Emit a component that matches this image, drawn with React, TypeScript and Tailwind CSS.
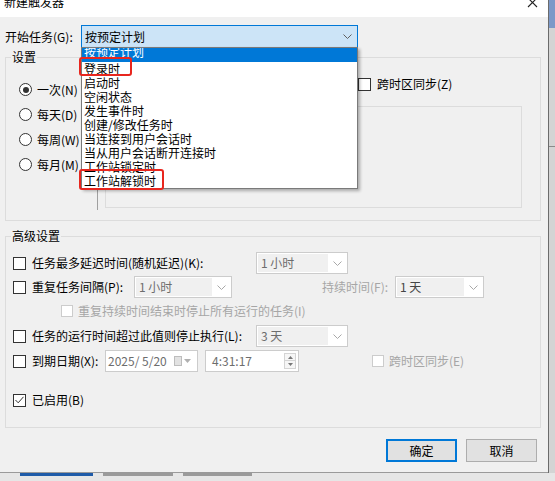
import React from 'react';

const Chevron = ({ color = '#606060' }: { color?: string }) => (
  <svg width="9" height="5" viewBox="0 0 9 5">
    <polyline points="0.5,0.5 4.5,4.5 8.5,0.5" fill="none" stroke={color} strokeWidth="1" />
  </svg>
);

const Checkbox = ({ checked = false, disabled = false }: { checked?: boolean; disabled?: boolean }) => (
  <span
    className={
      disabled
        ? 'flex h-[12px] w-[12px] shrink-0 items-center justify-center border border-[#cccccc] bg-white'
        : 'flex h-[13px] w-[13px] shrink-0 items-center justify-center border border-[#333333] bg-white'
    }
  >
    {checked && (
      <svg width="9" height="8" viewBox="0 0 9 8">
        <polyline points="0.5,4 3.2,6.8 8.5,0.8" fill="none" stroke="#333333" strokeWidth="1" />
      </svg>
    )}
  </span>
);

const Radio = ({ checked = false, label }: { checked?: boolean; label: string }) => (
  <div className="flex h-[25px] items-center gap-[5px] pl-[13px]">
    <span className="flex h-[13px] w-[13px] items-center justify-center rounded-full border border-[#333333] bg-white">
      {checked && <span className="h-[6px] w-[6px] rounded-full bg-[#333333]" />}
    </span>
    <span>{label}</span>
  </div>
);

const Combo = ({ text, width, dark = false }: { text: string; width: string; dark?: boolean }) => (
  <div className={`flex h-[22px] ${width} border border-[#cccccc] bg-white p-[1px]`}>
    <span className={`flex-1 bg-[#f0f0f0] pl-[3px] leading-[18px] ${dark ? 'text-[#444444]' : 'text-[#6d6d6d]'}`}>
      {text}
    </span>
    <span className="flex w-[18px] items-center justify-center">
      <Chevron color="#a8a8a8" />
    </span>
  </div>
);

const triggers = [
  '登录时',
  '启动时',
  '空闲状态',
  '发生事件时',
  '创建/修改任务时',
  '当连接到用户会话时',
  '当从用户会话断开连接时',
  '工作站锁定时',
  '工作站解锁时',
];

export default function App() {
  return (
    <div className="flex h-[481px] w-[555px] flex-col overflow-hidden bg-[#e6e6e6] font-['Noto_Sans_CJK_SC',sans-serif] text-[12px] leading-[14px] text-black">
      <div className="flex h-[473px]">
        {/* dialog window */}
        <div className="flex w-[548px] flex-col border-b border-[#9a9a9a] bg-[#f0f0f0]">
          <div className="flex h-[17px] shrink-0 justify-between overflow-hidden bg-white">
            <span className="-mt-[5px] pl-[4px]">新建触发器</span>
            <svg width="12" height="9" viewBox="0 0 12 9" className="mr-[9px]">
              <path d="M1 -2 L10 7 M10 -2 L1 7" stroke="#222222" strokeWidth="1.1" />
            </svg>
          </div>

          <div className="flex flex-1 flex-col pl-[5px] pr-[7px]">
            {/* begin task row */}
            <div className="relative mt-[8px] flex h-[23px] items-center">
              <span className="w-[76px]">开始任务(G):</span>
              <div className="flex h-[23px] w-[277px] items-center justify-between border border-[#0078d7] bg-[#cce4f7] pl-[3px] pr-[5px]">
                <span>按预定计划</span>
                <Chevron />
              </div>

              <div className="absolute left-[76px] top-[22px] z-10 flex h-[142px] w-[277px] flex-col border border-[#7a7a7a] bg-white shadow-[2px_2px_3px_rgba(0,0,0,0.3)]">
                <div className="h-[14px] overflow-hidden bg-[#0078d7] pl-[2px] text-white">
                  <span className="block -translate-y-[3px]">按预定计划</span>
                </div>
                {triggers.map((t) => (
                  <div key={t} className="h-[14px] overflow-hidden pl-[2px] leading-[14px]">
                    {t}
                  </div>
                ))}
              </div>

              <div className="absolute left-[74px] top-[32px] z-20 h-[19px] w-[53px] rounded-[3px] border-2 border-[#e8261e]" />
              <div className="absolute left-[74px] top-[144px] z-20 h-[21px] w-[85px] rounded-[3px] border-2 border-[#e8261e]" />
            </div>

            {/* settings group */}
            <fieldset className="mt-[2px] border border-[#dcdcdc] pb-[10px]">
              <legend className="ml-[5px] px-[1px] leading-[14px]">设置</legend>
              <div className="mt-[6px] flex h-[140px]">
                <div className="flex w-[91px] flex-col pt-[7px]">
                  <Radio checked label="一次(N)" />
                  <Radio label="每天(D)" />
                  <Radio label="每周(W)" />
                  <Radio label="每月(M)" />
                </div>
                <div className="w-px bg-[#a0a0a0]" />
                <div className="flex flex-col pl-[7px]">
                  <div className="flex h-[28px] items-center">
                    <span className="ml-[253px]">
                      <Checkbox />
                    </span>
                    <span className="ml-[6px]">跨时区同步(Z)</span>
                  </div>
                  <div className="mt-[8px] h-[102px] w-[417px] border border-[#dcdcdc]" />
                </div>
              </div>
            </fieldset>

            {/* advanced group */}
            <fieldset className="mt-[8px] border border-[#dcdcdc] pb-[15px]">
              <legend className="ml-[5px] px-[1px] leading-[14px]">高级设置</legend>
              <div className="flex flex-col pt-[8px]">
                <div className="flex h-[24px] items-center pl-[7px]">
                  <Checkbox />
                  <span className="ml-[6px] w-[224px]">任务最多延迟时间(随机延迟)(K):</span>
                  <Combo text="1 小时" width="w-[92px]" />
                </div>
                <div className="flex h-[24px] items-center pl-[7px]">
                  <Checkbox />
                  <span className="ml-[6px] w-[102px]">重复任务间隔(P):</span>
                  <Combo text="1 小时" width="w-[98px]" />
                  <span className="ml-[90px] w-[73px] text-[#a6a6a6]">持续时间(F):</span>
                  <Combo text="1 天" width="w-[89px]" dark />
                </div>
                <div className="flex h-[24px] items-center pl-[55px]">
                  <Checkbox disabled />
                  <span className="ml-[5px] text-[#a6a6a6]">重复持续时间结束时停止所有运行的任务(I)</span>
                </div>
                <div className="mt-[1px] flex h-[24px] items-center pl-[7px]">
                  <Checkbox />
                  <span className="ml-[6px] w-[224px]">任务的运行时间超过此值则停止执行(L):</span>
                  <Combo text="3 天" width="w-[92px]" />
                </div>
                <div className="mt-[1px] flex h-[24px] items-center pl-[7px]">
                  <Checkbox />
                  <span className="ml-[6px] w-[73px]">到期日期(X):</span>
                  <div className="flex h-[22px] w-[93px] items-center border border-[#cccccc] bg-white pl-[2px] text-[#6d6d6d]">
                    <span className="w-[66px]">2025/ 5/20</span>
                    <span className="h-[10px] w-[8px] border border-[#bdbdbd] bg-[#e2e2e2]" />
                    <svg width="7" height="4" viewBox="0 0 7 4" className="ml-[2px]">
                      <polygon points="0,0 7,0 3.5,4" fill="#b0b0b0" />
                    </svg>
                  </div>
                  <div className="ml-[7px] flex h-[22px] w-[94px] items-center justify-between border border-[#cccccc] bg-white pl-[6px] pr-[2px] text-[#6d6d6d]">
                    <span>4:31:17</span>
                    <div className="flex flex-col">
                      <span className="flex h-[8px] w-[12px] items-center justify-center border border-[#d4d4d4] bg-[#f6f6f6]">
                        <svg width="5" height="3" viewBox="0 0 5 3">
                          <polygon points="0,3 5,3 2.5,0" fill="#777777" />
                        </svg>
                      </span>
                      <span className="flex h-[8px] w-[12px] items-center justify-center border border-t-0 border-[#d4d4d4] bg-[#f6f6f6]">
                        <svg width="5" height="3" viewBox="0 0 5 3">
                          <polygon points="0,0 5,0 2.5,3" fill="#777777" />
                        </svg>
                      </span>
                    </div>
                  </div>
                  <span className="ml-[73px]">
                    <Checkbox disabled />
                  </span>
                  <span className="ml-[5px] text-[#a6a6a6]">跨时区同步(E)</span>
                </div>
                <div className="mt-[15px] flex h-[24px] items-center pl-[7px]">
                  <Checkbox checked />
                  <span className="ml-[6px]">已启用(B)</span>
                </div>
              </div>
            </fieldset>

            {/* buttons */}
            <div className="mt-[11px] flex justify-end gap-[9px] pr-[4px]">
              <button className="flex h-[23px] w-[71px] items-center justify-center border-2 border-[#0078d7] bg-[#e1e1e1]">
                确定
              </button>
              <button className="flex h-[23px] w-[71px] items-center justify-center border border-[#adadad] bg-[#e1e1e1]">
                取消
              </button>
            </div>
          </div>
        </div>

        {/* window behind, right edge */}
        <div className="flex w-[7px] flex-col border-l border-[#6b6b6b]">
          <div className="h-[28px] bg-[#7d99c8]" />
          <div className="h-[119px] border-b border-[#8a8a8a] bg-[#d4d4d4]" />
          <div className="flex-1 bg-[#d4d4d4]" />
        </div>
      </div>

      {/* taskbar-ish strip below */}
      <div className="flex h-[8px] items-start pl-[20px]">
        <span className="h-[3px] w-[73px] bg-[#1f5ba8]" />
        <span className="ml-[10px] h-[3px] w-[70px] bg-[#9a9a9a]" />
        <span className="ml-[10px] h-[3px] w-[69px] bg-[#9a9a9a]" />
      </div>
    </div>
  );
}
